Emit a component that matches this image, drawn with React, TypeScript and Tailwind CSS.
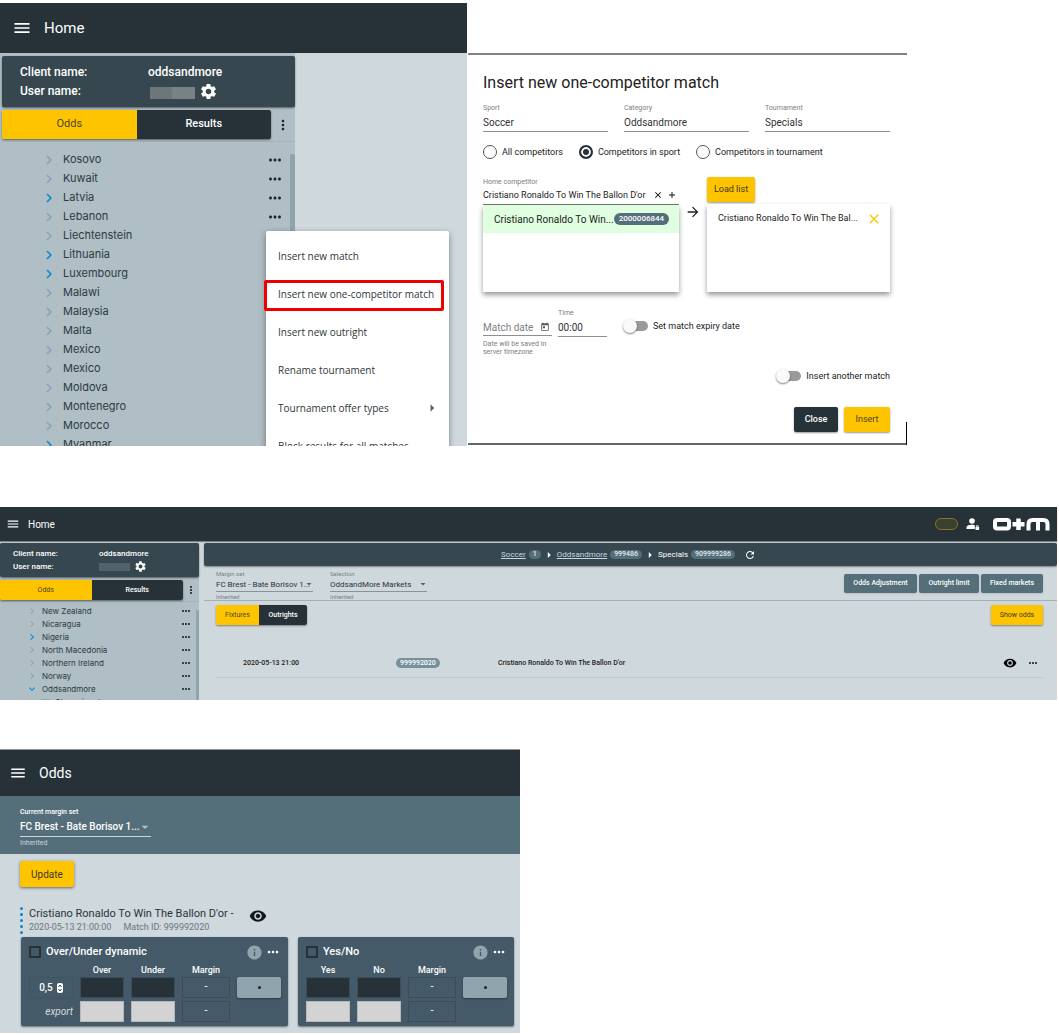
import { useState, type ReactNode } from "react";
import {
  MdAdd,
  MdArrowDropDown,
  MdArrowForward,
  MdArrowRight,
  MdChevronRight,
  MdClose,
  MdExpandMore,
  MdInfo,
  MdMenu,
  MdMoreHoriz,
  MdMoreVert,
  MdRefresh,
  MdSettings,
  MdToday,
  MdVisibility,
} from "react-icons/md";

type Country = { name: string; state?: "active" | "open" };

const countries: Country[] = [
  { name: "Kosovo" },
  { name: "Kuwait" },
  { name: "Latvia", state: "active" },
  { name: "Lebanon" },
  { name: "Liechtenstein" },
  { name: "Lithuania", state: "active" },
  { name: "Luxembourg", state: "active" },
  { name: "Malawi" },
  { name: "Malaysia" },
  { name: "Malta" },
  { name: "Mexico" },
  { name: "Mexico" },
  { name: "Moldova" },
  { name: "Montenegro" },
  { name: "Morocco" },
  { name: "Myanmar", state: "active" },
];

const moreCountries: Country[] = [
  { name: "New Zealand" },
  { name: "Nicaragua" },
  { name: "Nigeria", state: "active" },
  { name: "North Macedonia" },
  { name: "Northern Ireland" },
  { name: "Norway" },
  { name: "Oddsandmore", state: "open" },
];

const menuItems = [
  "Insert new match",
  "Insert new one-competitor match",
  "Insert new outright",
  "Rename tournament",
  "Tournament offer types",
  "Block results for all matches",
];

function TreeChevron({ state, className }: { state?: string; className: string }) {
  if (state === "open") return <MdExpandMore className={`${className} text-[#0288d1]`} />;
  return (
    <MdChevronRight
      className={`${className} ${state ? "text-[#0288d1]" : "text-[#8da2ad]"}`}
    />
  );
}

function ContextMenu() {
  return (
    <ul
      role="menu"
      className="absolute top-[228px] left-[266px] w-[183px] rounded-t-xs bg-white pt-1.5 text-[10px] text-[#303638] shadow-[0_2px_6px_rgba(0,0,0,0.4)] [font-family:'Open_Sans',sans-serif]"
    >
      {menuItems.map((item, i) => (
        <li key={item} role="none" className="relative h-[38px]">
          <button
            role="menuitem"
            className="flex h-full w-full items-center justify-between pr-2 pl-3 whitespace-nowrap"
          >
            {item}
            {i === 4 && <MdArrowRight className="size-[18px] text-[#616161]" />}
          </button>
          {i === 1 && (
            <span className="pointer-events-none absolute -left-0.5 top-[5px] h-[31px] w-[180px] rounded-xs border-3 border-[#ee0000]" />
          )}
        </li>
      ))}
    </ul>
  );
}

function HomePanel() {
  return (
    <section className="relative h-[443px] w-[467px] shrink-0 overflow-hidden bg-[#cfd8dd]">
      <header className="flex h-[50px] items-center bg-[#263238] text-white">
        <button aria-label="Menu" className="ml-3">
          <MdMenu className="size-5" />
        </button>
        <h1 className="ml-3 text-[15px]">Home</h1>
      </header>
      <aside className="w-[295px] bg-[#b0bec5] pt-[3px] pl-0.5">
        <dl className="grid h-[51px] grid-cols-[128px_1fr] content-center rounded-xs bg-[#37474f] pl-[18px] text-xs leading-[19px] font-medium text-white shadow-[0_1px_2px_rgba(0,0,0,0.5)]">
          <dt>Client name:</dt>
          <dd>oddsandmore</dd>
          <dt>User name:</dt>
          <dd className="flex items-center gap-1 pl-0.5">
            <span className="mt-1 flex h-3 w-[45px] bg-[#6c777c]">
              <span className="ml-auto w-[23px] bg-[#778286]" />
            </span>
            <button aria-label="Settings">
              <MdSettings className="size-[19px]" />
            </button>
          </dd>
        </dl>
        <div className="mt-[3px] flex items-center pb-0.5">
          <div className="flex h-[29px] w-[269px] overflow-hidden rounded-xs text-[11px] shadow-[0_1px_2px_rgba(0,0,0,0.5)]">
            <button className="flex-1 bg-[#ffc400] text-[#4a4528]">Odds</button>
            <button className="flex-1 bg-[#263238] font-medium text-white">Results</button>
          </div>
          <button aria-label="More" className="ml-1 text-[#1c2529]">
            <MdMoreVert className="size-4" />
          </button>
        </div>
        <div className="flex border-t border-[#a5b4bc]">
          <ul className="flex-1 pt-2 font-[Inter,sans-serif] text-[11px] text-[#2c3a41]">
            {countries.map((c, i) => (
              <li key={i} className="flex h-[19px] items-center pr-1.5">
                <TreeChevron state={c.state} className="ml-[38px] size-[18px]" />
                <span className="ml-[5px] flex-1">{c.name}</span>
                <button aria-label={`${c.name} actions`} className="text-[#1c2529]">
                  <MdMoreHoriz className="size-[18px]" />
                </button>
              </li>
            ))}
          </ul>
          <div className="mt-3 w-[5px] rounded-t-xs bg-[#90a4ae]" />
        </div>
      </aside>
      <ContextMenu />
    </section>
  );
}

function TextField({ label, value }: { label: string; value: string }) {
  return (
    <label className="block min-w-0 flex-1 border-b border-[#8f8f8f] text-[7px] leading-[10px] text-[#7c7c7c]">
      {label}
      <input
        defaultValue={value}
        className="block h-[18px] w-full text-[10px] text-[#333] outline-none"
      />
    </label>
  );
}

function Toggle({ label }: { label: string }) {
  return (
    <label className="flex items-center gap-[5px] text-[9px] leading-4 whitespace-nowrap text-[#222]">
      <span className="relative flex h-3.5 w-[25px] items-center justify-end">
        <input type="checkbox" className="peer sr-only" />
        <span className="h-2.5 w-[22px] rounded-full bg-[#9a9a9a]" />
        <span className="absolute left-0 size-3.5 rounded-full bg-[#fafafa] shadow-[0_1px_2px_rgba(0,0,0,0.5)] peer-checked:left-[11px]" />
      </span>
      {label}
    </label>
  );
}

const scopes = ["All competitors", "Competitors in sport", "Competitors in tournament"];

function MatchDialog() {
  const [scope, setScope] = useState(scopes[1]);
  return (
    <form className="relative mt-[50px] ml-px h-[392px] w-[439px] border-t-2 border-b-2 border-t-[#7d8489] border-b-[#5f676b] pr-[17px] pl-[15px]">
      <h2 className="mt-4 text-base leading-6 text-[#222]">Insert new one-competitor match</h2>
      <div className="mt-2 flex gap-4">
        <TextField label="Sport" value="Soccer" />
        <TextField label="Category" value="Oddsandmore" />
        <TextField label="Tournament" value="Specials" />
      </div>
      <div className="mt-3 flex gap-4">
        {scopes.map((s) => (
          <label key={s} className="flex items-center gap-[5px] text-[9px] leading-4 text-[#222]">
            <input
              type="radio"
              name="scope"
              checked={scope === s}
              onChange={() => setScope(s)}
              className="size-3.5 appearance-none rounded-full border border-[#555] bg-white checked:border-2 checked:border-[#263238] checked:bg-[#263238] checked:shadow-[inset_0_0_0_2px_#fff]"
            />
            {s}
          </label>
        ))}
      </div>
      <div className="mt-[17px] flex">
        <div className="w-[196px]">
          <div className="flex items-end border-b border-[#777]">
            <label className="flex-1 pb-0.5 text-[7px] leading-[10px] text-[#7c7c7c]">
              Home competitor
              <input
                defaultValue="Cristiano Ronaldo To Win The Ballon D'or"
                className="block h-[15px] w-full min-w-0 text-[9px] text-[#222] outline-none"
              />
            </label>
            <button type="button" aria-label="Clear" className="mb-1">
              <MdClose className="size-[10px]" />
            </button>
            <button type="button" aria-label="Add" className="mr-0.5 mb-1 ml-1">
              <MdAdd className="size-[10px]" />
            </button>
          </div>
          <div className="h-[87px] bg-white shadow-[0_3px_5px_rgba(0,0,0,0.4)]">
            <div className="flex h-7 items-center bg-[#e0ffe0] pr-3 pl-[11px] text-[10px] whitespace-nowrap text-[#222]">
              <span className="flex-1">Cristiano Ronaldo To Win...</span>
              <span className="rounded-full bg-[#546e7a] px-[5px] text-[8px] leading-3 font-medium text-white">
                2000006844
              </span>
            </div>
          </div>
        </div>
        <div className="flex w-7 justify-center pt-[27px]">
          <MdArrowForward className="size-4 text-[#222]" />
        </div>
        <div className="flex-1">
          <button
            type="button"
            className="block h-[25px] w-12 rounded-xs bg-[#ffc400] text-[9px] whitespace-nowrap text-[#3d3824] shadow-[0_1px_2px_rgba(0,0,0,0.4)]"
          >
            Load list
          </button>
          <div className="mt-0.5 h-[88px] bg-white shadow-[0_3px_5px_rgba(0,0,0,0.4)]">
            <div className="flex h-[30px] items-center justify-between pr-2 pl-[11px] text-[9px] text-[#222]">
              Cristiano Ronaldo To Win The Bal...
              <button type="button" aria-label="Remove">
                <MdClose className="size-4 text-[#ffc400]" />
              </button>
            </div>
          </div>
        </div>
      </div>
      <div className="mt-4 flex items-start">
        <div className="w-[69px] pt-[11px]">
          <div className="flex h-[17px] items-center border-b border-[#8f8f8f]">
            <input
              aria-label="Match date"
              placeholder="Match date"
              className="w-0 flex-1 text-[10px] outline-none placeholder:text-[#808080]"
            />
            <MdToday className="mr-0.5 size-2.5 text-[#555]" />
          </div>
          <p className="pt-1 text-[7px] leading-2 whitespace-nowrap text-[#7c7c7c]">
            Date will be saved in
            <br />
            server timezone
          </p>
        </div>
        <div className="ml-1.5 flex w-[49px]">
          <TextField label="Time" value="00:00" />
        </div>
        <div className="mt-2.5 ml-4">
          <Toggle label="Set match expiry date" />
        </div>
      </div>
      <div className="mt-3 flex justify-end">
        <Toggle label="Insert another match" />
      </div>
      <div className="mt-[23px] flex justify-end gap-1.5 text-[10px]">
        <button
          type="button"
          className="h-[25px] w-11 rounded-xs bg-[#263238] text-[9px] font-medium text-white shadow-[0_1px_2px_rgba(0,0,0,0.4)]"
        >
          Close
        </button>
        <button
          type="button"
          className="h-[25px] w-[46px] rounded-xs bg-[#ffc400] text-[9px] text-[#4a4528] shadow-[0_1px_2px_rgba(0,0,0,0.4)]"
        >
          Insert
        </button>
      </div>
      <span className="absolute right-0 -bottom-0.5 h-[23px] w-px bg-black" />
    </form>
  );
}

function Logo() {
  return (
    <svg viewBox="0 0 58 14" className="h-3.5 w-[58px]" fill="none" stroke="#fff" strokeWidth="4">
      <rect x="3" y="3" width="14" height="8.500" rx="2" />
      <path d="M26.500 1.500v11.500M20.500 7.200h12" strokeWidth="4.500" />
      <path
        d="M36.500 13.500V7Q36.500 3 40.500 3H51.500Q55.500 3 55.500 7V13.500M46 3V13.500"
        strokeLinejoin="round"
      />
    </svg>
  );
}

function UserLock() {
  return (
    <svg viewBox="0 0 14 14" className="size-3.5" fill="#fff">
      <circle cx="6" cy="4" r="2.800" />
      <path d="M0.500 12V10.500C0.500 8.500 3.500 7.800 6 7.800c1 0 2 .1 2.800.4V12z" />
      <path d="M9.500 9.800h.6v-.7a1.200 1.200 0 0 1 2.400 0v.7h.6V13H9.500zM10.800 9.800h1v-.7a.5.5 0 0 0-1 0z" />
    </svg>
  );
}

function SmallSelect({ label, value }: { label: string; value: string }) {
  return (
    <div className="w-[97px] text-[6px] leading-[7px] text-[#75838a]">
      <label>
        {label}
        <span className="relative block border-b border-[#88949a]">
          <select className="block h-3.5 w-full appearance-none text-[8px] text-[#2c3336] outline-none">
            <option>{value}</option>
          </select>
          <MdArrowDropDown className="pointer-events-none absolute top-px -right-0.5 size-3 text-[#555f64]" />
        </span>
      </label>
      <p className="pt-px">Inherited</p>
    </div>
  );
}

function Badge({ children }: { children: ReactNode }) {
  return (
    <span className="rounded-full bg-[#546e7a] px-1 text-[7px] leading-[9px] font-medium text-[#e3eaed]">
      {children}
    </span>
  );
}

function FixturesPanel() {
  return (
    <section className="mt-[61px] mr-0.5 bg-[#cfd8dd]">
      <header className="flex h-[34px] items-center bg-[#263238] pr-[7px] text-white shadow-[0_1px_1px_rgba(0,0,0,0.4)]">
        <button aria-label="Menu" className="ml-1.5">
          <MdMenu className="size-3.5" />
        </button>
        <h2 className="ml-2 text-[10px]">Home</h2>
        <span className="ml-auto h-3 w-[23px] rounded-full border border-[#8a7322] bg-[#38402f]" />
        <button aria-label="Account" className="ml-2">
          <UserLock />
        </button>
        <span className="ml-3">
          <Logo />
        </span>
      </header>
      <div className="flex h-[159px] overflow-hidden pt-0.5">
        <aside className="w-[199px] shrink-0 bg-[#b0bec5]">
          <dl className="grid h-[34px] grid-cols-[86px_1fr] content-center rounded-xs bg-[#37474f] pl-[13px] text-[8px] leading-[13px] font-medium text-white shadow-[0_1px_2px_rgba(0,0,0,0.5)]">
            <dt>Client name:</dt>
            <dd>oddsandmore</dd>
            <dt>User name:</dt>
            <dd className="flex items-center gap-1">
              <span className="h-2 w-[31px] bg-[#52616a]" />
              <button aria-label="Settings">
                <MdSettings className="size-[13px]" />
              </button>
            </dd>
          </dl>
          <div className="mt-[3px] flex items-center border-b border-[#a5b4bc] pb-px">
            <div className="flex h-5 w-[183px] overflow-hidden rounded-xs text-[7px] shadow-[0_1px_2px_rgba(0,0,0,0.5)]">
              <button className="flex-1 bg-[#ffc400] text-[#4a4528]">Odds</button>
              <button className="flex-1 bg-[#263238] font-medium text-white">Results</button>
            </div>
            <button aria-label="More" className="ml-0.5 text-[#1c2529]">
              <MdMoreVert className="size-3" />
            </button>
          </div>
          <div className="flex">
            <ul className="flex-1 pt-0.5 font-[Inter,sans-serif] text-[8px] text-[#2c3a41]">
              {moreCountries.map((c) => (
                <li key={c.name} className="flex h-[13px] items-center pr-1">
                  <TreeChevron state={c.state} className="ml-[26px] size-3" />
                  <span className="ml-1 flex-1">{c.name}</span>
                  <button aria-label={`${c.name} actions`} className="text-[#1c2529]">
                    <MdMoreHoriz className="size-3" />
                  </button>
                </li>
              ))}
              <li className="flex h-[13px] items-center gap-[5px] pl-[41px]">
                <span className="h-1.5 w-[9px] bg-[#90a4ae]" />
                Championat
              </li>
            </ul>
            <div className="mt-2 w-[3px] bg-[#90a4ae]" />
          </div>
        </aside>
        <main className="ml-[5px] min-w-0 flex-1 text-[8px]">
          <nav className="flex h-[23px] items-center justify-center gap-[3px] rounded-xs bg-[#37474f] pr-1 text-white shadow-[0_1px_2px_rgba(0,0,0,0.4)]">
            <a href="#soccer" className="text-[#c4d8e2] underline">Soccer</a>
            <Badge>1</Badge>
            <MdArrowRight className="-mx-0.5 size-3.5" />
            <a href="#oddsandmore" className="text-[#c4d8e2] underline">Oddsandmore</a>
            <Badge>999486</Badge>
            <MdArrowRight className="-mx-0.5 size-3.5" />
            <span>Specials</span>
            <Badge>909999286</Badge>
            <button aria-label="Refresh" className="ml-1.5">
              <MdRefresh className="size-3" />
            </button>
          </nav>
          <div className="flex h-[35px] items-start border-b border-[#a3afb5] pt-1 pr-3.5 pl-3">
            <SmallSelect label="Margin set" value="FC Brest - Bate Borisov 1..." />
            <div className="ml-[17px]">
              <SmallSelect label="Selection" value="OddsandMore Markets" />
            </div>
            <div className="mt-1 ml-auto flex gap-0.5 text-[7px] font-medium whitespace-nowrap text-white">
              <button className="h-[19px] w-[73px] rounded-xs bg-[#546e7a] shadow-sm">Odds Adjustment</button>
              <button className="h-[19px] w-[60px] rounded-xs bg-[#546e7a] shadow-sm">Outright limit</button>
              <button className="h-[19px] w-[62px] rounded-xs bg-[#546e7a] shadow-sm">Fixed markets</button>
            </div>
          </div>
          <div className="mt-1 flex justify-between pr-3.5 pl-3 text-[7px]">
            <div className="flex h-5 overflow-hidden rounded-xs shadow-[0_1px_2px_rgba(0,0,0,0.4)]">
              <button className="w-[43px] bg-[#ffc400] text-[#4a4528]">Fixtures</button>
              <button className="w-12 bg-[#263238] font-medium text-white">Outrights</button>
            </div>
            <button className="h-5 w-[52px] rounded-xs bg-[#ffc400] text-[#3d3824] shadow-[0_1px_2px_rgba(0,0,0,0.4)]">
              Show odds
            </button>
          </div>
          <div className="mt-6 pr-3.5 pl-3">
            <table className="w-full table-fixed border-b border-[#c0c9cd] text-[7px] font-medium text-[#222]">
              <tbody>
                <tr className="h-7">
                  <td className="w-[180px] pl-[27px]">2020-05-13 21:00</td>
                  <td className="w-[102px]">
                    <span className="rounded-full bg-[#78909c] px-1 py-px text-[7px] text-white">
                      999992020
                    </span>
                  </td>
                  <td>Cristiano Ronaldo To Win The Ballon D'or</td>
                  <td className="w-14">
                    <span className="flex items-center justify-end gap-2.5 pr-1">
                      <button aria-label="View">
                        <MdVisibility className="size-3.5 text-black" />
                      </button>
                      <button aria-label="Fixture actions">
                        <MdMoreHoriz className="size-3" />
                      </button>
                    </span>
                  </td>
                </tr>
              </tbody>
            </table>
          </div>
        </main>
      </div>
    </section>
  );
}

function Stepper() {
  return (
    <svg viewBox="0 0 6 10" className="h-2.5 w-1.5">
      <rect width="6" height="10" rx="2" fill="#fff" />
      <path d="M1.500 4 3 2l1.500 2M1.500 6 3 8l1.500-2" fill="none" stroke="#37474f" />
    </svg>
  );
}

function OddsCard({ title, columns, line }: { title: string; columns: string[]; line?: string }) {
  const cell = "h-[21px] w-11";
  const margin =
    "grid h-[21px] w-12 place-items-center border border-[#3b4d5a] text-[11px] text-white";
  return (
    <article className="rounded-xs bg-[#455a68] pt-[7px] pr-[7px] pb-1 pl-2 text-white shadow-[0_1px_2px_rgba(0,0,0,0.5)]">
      <div className="flex h-4 items-center">
        <label className="flex items-center gap-[5px] text-[11px] font-medium">
          <input
            type="checkbox"
            className="size-3 appearance-none rounded-[1px] border-2 border-[#263238] checked:bg-[#263238]"
          />
          {title}
        </label>
        <button aria-label={`${title} info`} className="ml-auto text-[#90a4ae]">
          <MdInfo className="size-[17px]" />
        </button>
        <button aria-label={`${title} actions`} className="ml-0.5">
          <MdMoreHoriz className="size-4" />
        </button>
      </div>
      <div
        className={`mt-1 grid gap-x-[7px] gap-y-[3px] text-center ${
          line ? "grid-cols-[44px_44px_44px_48px_44px]" : "grid-cols-[44px_44px_48px_44px]"
        }`}
      >
        {line && <span />}
        {[...columns, "Margin"].map((c) => (
          <span key={c} className="h-2.5 text-[9px] leading-3 font-medium">
            {c}
          </span>
        ))}
        <span />
        {line && (
          <span className="flex items-center justify-center gap-1 border border-[#415461] text-[10px] font-medium">
            {line} <Stepper />
          </span>
        )}
        {columns.map((c) => (
          <input key={c} aria-label={c} className={`${cell} border border-[#3b4d5a] bg-[#263238]`} />
        ))}
        <span className={margin}>-</span>
        <button
          aria-label={`${title} status`}
          className="grid h-[21px] w-11 place-items-center rounded-xs bg-[#90a4ae] shadow-[0_1px_2px_rgba(0,0,0,0.4)]"
        >
          <span className="size-[3px] rounded-full bg-[#222]" />
        </button>
        {line && <span className="self-center text-right text-[10px] text-[#d5dde1] italic">export</span>}
        {columns.map((c) => (
          <input
            key={c}
            aria-label={`${c} export`}
            className={`${cell} border border-[#b5b9bb] bg-[#d3d3d3]`}
          />
        ))}
        <span className={margin}>-</span>
        <span />
      </div>
    </article>
  );
}

function OddsPanel() {
  return (
    <section className="mt-[49px] w-[520px] border-t border-[#8d9396] bg-[#cfd8dd] pb-[7px]">
      <header className="flex h-[46px] items-center bg-[#263238] text-white">
        <button aria-label="Menu" className="ml-[9px]">
          <MdMenu className="size-[18px]" />
        </button>
        <h2 className="ml-3 text-sm">Odds</h2>
      </header>
      <div className="h-[58px] bg-[#546e7a] px-5 pt-3 text-[8px] text-[#ccd6db]">
        <label className="block w-[131px] text-[7px] leading-[9px] font-medium text-white">
          Current margin set
          <span className="relative block border-b border-[#cbd5da]">
            <select className="block h-[19px] w-full appearance-none text-[10px] outline-none">
              <option>FC Brest - Bate Borisov 1...</option>
            </select>
            <MdArrowDropDown className="pointer-events-none absolute top-0.5 -right-0.5 size-4 text-[#b4c1c8]" />
          </span>
        </label>
        <p className="pt-0.5 text-[7px] leading-2">Inherited</p>
      </div>
      <button className="mt-[7px] ml-5 block h-[26px] w-[54px] rounded-xs bg-[#ffc400] text-[10px] text-[#3d3824] shadow-[0_1px_3px_rgba(0,0,0,0.5)]">
        Update
      </button>
      <div className="mt-5 ml-5 flex items-start">
        <span className="flex h-[27px] w-0.5 flex-col justify-between">
          {[0, 1, 2, 3, 4].map((n) => (
            <span key={n} className="size-[3px] rounded-full bg-[#0288d1]" />
          ))}
        </span>
        <div className="ml-[7px]">
          <h3 className="text-[11px] leading-[14px] text-[#2a3337]">
            Cristiano Ronaldo To Win The Ballon D'or -
          </h3>
          <p className="flex gap-3 text-[9px] leading-[13px] text-[#69767c]">
            <span>2020-05-13 21:00:00</span>
            <span>Match ID: 999992020</span>
          </p>
        </div>
        <button aria-label="View match" className="ml-4 text-[#15191b]">
          <MdVisibility className="size-[18px]" />
        </button>
      </div>
      <div className="mt-[3px] ml-[21px] flex gap-2.5">
        <OddsCard title="Over/Under dynamic" columns={["Over", "Under"]} line="0,5" />
        <OddsCard title="Yes/No" columns={["Yes", "No"]} />
      </div>
    </section>
  );
}

export default function App() {
  return (
    <div className="min-h-screen bg-white pt-[3px] [font-family:Roboto,'Noto_Sans',sans-serif]">
      <div className="flex items-start">
        <HomePanel />
        <MatchDialog />
      </div>
      <FixturesPanel />
      <OddsPanel />
    </div>
  );
}
